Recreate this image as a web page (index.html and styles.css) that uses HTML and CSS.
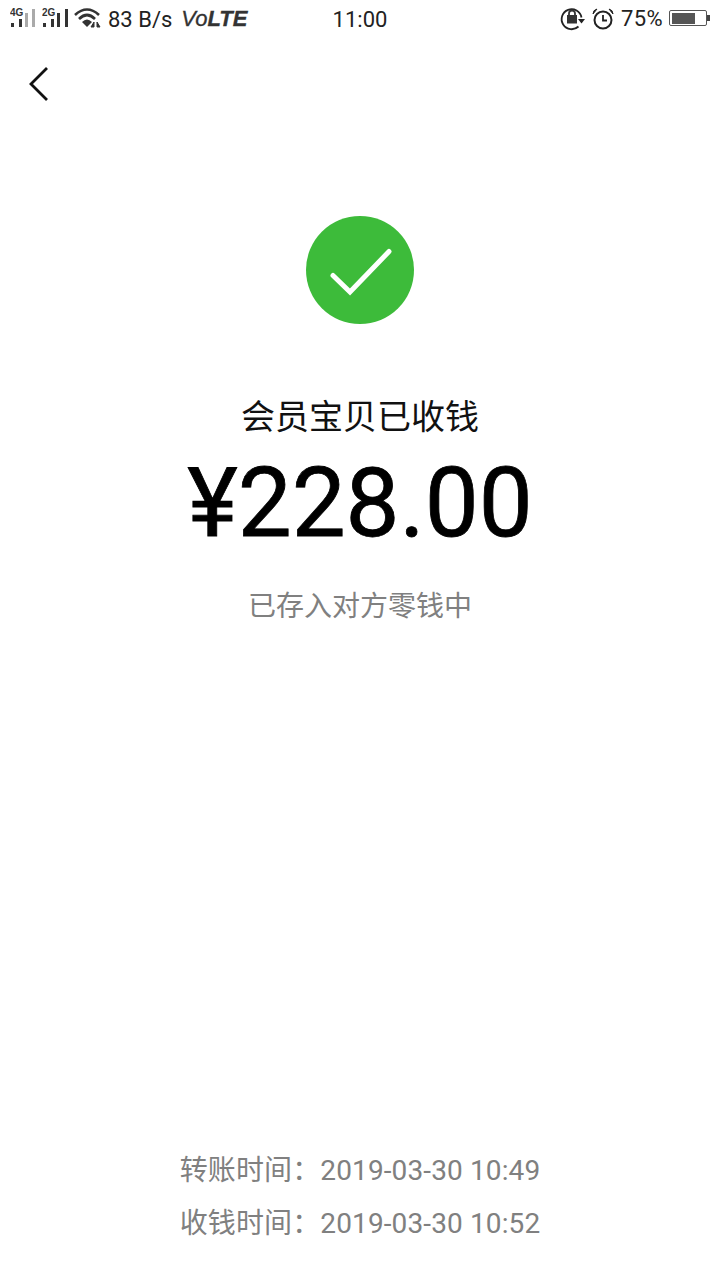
FILE: index.html
```html
<!DOCTYPE html>
<html lang="zh">
<head>
<meta charset="utf-8">
<title>已收钱</title>
<link rel="stylesheet" href="styles.css">
</head>
<body>
<div class="page">
  <div class="statusbar">
    <div class="status-left">
      <svg width="32" height="24" viewBox="0 0 32 24">
        <text x="0" y="9" class="net">4G</text>
        <rect x="1" y="16" width="3" height="4" fill="#333"/>
        <rect x="9" y="12" width="3" height="8" fill="#333"/>
        <rect x="15" y="6" width="3" height="14" fill="#aaa"/>
        <rect x="22" y="2" width="3" height="18" fill="#aaa"/>
      </svg>
      <svg width="32" height="24" viewBox="0 0 32 24">
        <text x="0" y="9" class="net">2G</text>
        <rect x="1" y="16" width="3" height="4" fill="#333"/>
        <rect x="9" y="12" width="3" height="8" fill="#333"/>
        <rect x="15" y="6" width="3" height="14" fill="#333"/>
        <rect x="23" y="2" width="3" height="18" fill="#333"/>
      </svg>
      <svg width="30" height="24" viewBox="0 0 30 24">
        <path d="M1 8 Q13 -3 25 8" fill="none" stroke="#333" stroke-width="2.6"/>
        <path d="M5 12 Q13 4 21 12" fill="none" stroke="#333" stroke-width="2.6"/>
        <path d="M8 15 Q13 10 18 15 L13 20 Z" fill="#333"/>
        <path d="M20 15 V20 H17 Z M23 15 V20 H26 Z" fill="#333" stroke="#333"/>
      </svg>
      <span class="speed">83 B/s</span>
      <span class="volte">Vo<b>LTE</b></span>
    </div>
    <div class="clock">11:00</div>
    <div class="status-right">
      <svg width="26" height="24" viewBox="0 0 26 24">
        <path d="M19.5 19.5 A10 10 0 1 1 22.5 10.5" fill="none" stroke="#222" stroke-width="1.8"/>
        <path d="M19 12 H26 L22.5 16.5 Z" fill="#222"/>
        <rect x="8" y="8" width="10" height="8.5" fill="#333"/>
        <path d="M10 9 V6.5 A3 3 0 0 1 16 6.5 V9" fill="none" stroke="#333" stroke-width="1.8"/>
      </svg>
      <svg width="24" height="24" viewBox="0 0 24 24">
        <circle cx="12" cy="13" r="8.5" fill="none" stroke="#222" stroke-width="2"/>
        <path d="M12 8 V13.5 H16" fill="none" stroke="#222" stroke-width="1.8"/>
        <path d="M2 7 Q2 3 6 2 Z M22 7 Q22 3 18 2 Z" fill="#222" stroke="#222"/>
      </svg>
      <span class="pct">75%</span>
      <div class="battery"><div class="battery-fill"></div></div>
      <div class="battery-tip"></div>
    </div>
  </div>

  <div class="navbar">
    <svg width="20" height="34" viewBox="0 0 20 34">
      <path d="M18 1 L2 17 L18 33" fill="none" stroke="#111" stroke-width="2.8"/>
    </svg>
  </div>

  <div class="result">
    <svg width="108" height="108" viewBox="0 0 108 108">
      <circle cx="54" cy="54" r="54" fill="#3dbb3a"/>
      <path d="M27 59.5 L44 76 L83 35.5" fill="none" stroke="#fff" stroke-width="5" stroke-linecap="round"/>
    </svg>
    <div class="title">会员宝贝已收钱</div>
    <div class="amount">¥228.00</div>
    <div class="note">已存入对方零钱中</div>
  </div>

  <div class="times">
    <div>转账时间：2019-03-30 10:49</div>
    <div>收钱时间：2019-03-30 10:52</div>
  </div>
</div>
</body>
</html>
```

FILE: styles.css
```css
html, body {
  margin: 0;
  background: #fff;
}
body {
  font-family: Roboto, "Noto Sans CJK SC", sans-serif;
}
.page {
  width: 720px;
  height: 1280px;
  display: flex;
  flex-direction: column;
  overflow: hidden;
}
.statusbar {
  height: 38px;
  display: flex;
  align-items: center;
  justify-content: space-between;
  padding: 0 10px;
  color: #222;
  position: relative;
}
.status-left, .status-right {
  display: flex;
  align-items: center;
}
.net {
  font-family: "Liberation Sans", sans-serif;
  font-size: 10px;
  font-weight: bold;
  fill: #333;
}
.speed {
  font-size: 22px;
  margin-left: 4px;
}
.volte {
  font-family: "Liberation Sans", sans-serif;
  font-size: 22px;
  font-style: italic;
  margin-left: 9px;
  color: #333;
  -webkit-text-stroke: 0.3px #333;
}
.clock {
  position: absolute;
  left: 0;
  right: 0;
  text-align: center;
  font-size: 22px;
}
.status-right svg {
  margin-right: 6px;
}
.pct {
  font-size: 22px;
  letter-spacing: 0.4px;
  margin-right: 6px;
  margin-top: -2px;
}
.battery {
  box-sizing: border-box;
  width: 38px;
  height: 16px;
  border: 1.5px solid #555;
  border-radius: 2px;
  padding: 1.5px;
  margin-top: -2px;
}
.battery-fill {
  width: 72%;
  height: 100%;
  background: #555;
}
.battery-tip {
  width: 3px;
  height: 6px;
  background: #444;
  margin-top: -2px;
}
.navbar {
  height: 94px;
  padding: 29px 0 0 29px;
  box-sizing: border-box;
}
.result {
  flex: 1;
  display: flex;
  flex-direction: column;
  align-items: center;
  padding-top: 84px;
}
.title {
  margin-top: 68px;
  font-size: 34px;
  line-height: 50px;
  color: #111;
}
.amount {
  font-size: 96px;
  line-height: 112px;
  margin-top: 5px;
  color: #000;
  -webkit-text-stroke: 0.8px #000;
}
.note {
  margin-top: 28px;
  font-size: 28px;
  line-height: 40px;
  color: #808080;
}
.times {
  padding-bottom: 30px;
  text-align: center;
  font-size: 28px;
  letter-spacing: 0.12px;
  line-height: 53px;
  color: #808080;
}
```
